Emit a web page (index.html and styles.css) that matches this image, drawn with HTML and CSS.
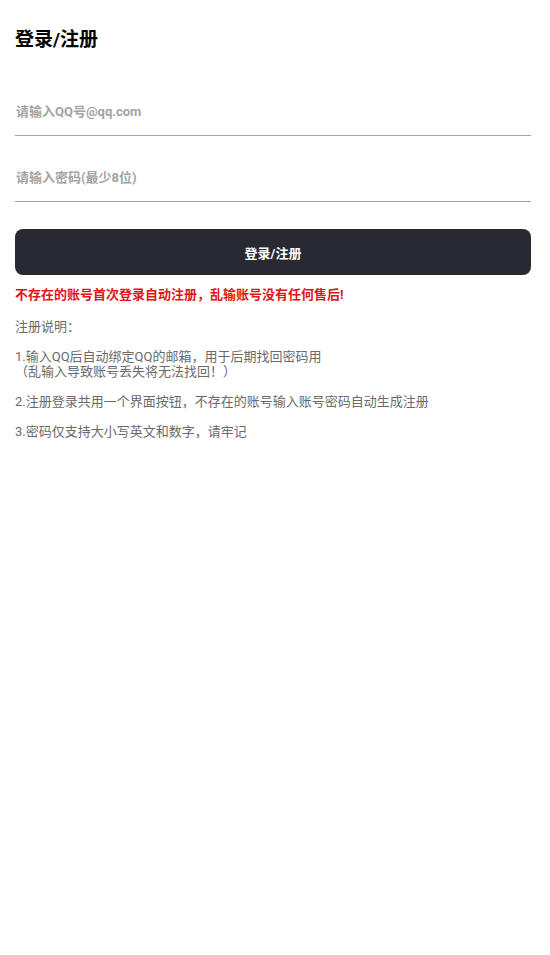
FILE: index.html
```html
<!DOCTYPE html>
<html lang="zh-CN">
<head>
<meta charset="utf-8">
<title>登录/注册</title>
<link rel="stylesheet" href="styles.css">
</head>
<body>
<div class="page">
  <h1 class="title">登录/注册</h1>
  <form class="form">
    <input class="field" type="text" placeholder="请输入QQ号@qq.com">
    <input class="field" type="password" placeholder="请输入密码(最少8位)">
    <button class="btn" type="button">登录/注册</button>
  </form>
  <p class="warn">不存在的账号首次登录自动注册，乱输账号没有任何售后!</p>
  <div class="notes">
    <p>注册说明：</p>
    <p>1.输入QQ后自动绑定QQ的邮箱，用于后期找回密码用<br>（乱输入导致账号丢失将无法找回！）</p>
    <p>2.注册登录共用一个界面按钮，不存在的账号输入账号密码自动生成注册</p>
    <p>3.密码仅支持大小写英文和数字，请牢记</p>
  </div>
</div>
</body>
</html>
```
FILE: styles.css
```css
* { box-sizing: border-box; }
html, body { margin: 0; padding: 0; background: #fff; }
body {
  font-family: Roboto, "Noto Sans CJK SC", "Noto Sans", sans-serif;
  color: #333;
}
.page {
  padding: 26px 19px 0 15px;
}
.title {
  margin: 0;
  font-size: 19px;
  line-height: 28px;
  font-weight: 700;
  color: #000;
}
.form {
  display: flex;
  flex-direction: column;
  margin-top: 34px;
}
.field {
  height: 48px;
  border: 0;
  border-bottom: 1.5px solid #a3a3a3;
  padding: 0 1px;
  font-family: inherit;
  font-size: 13px;
  font-weight: 700;
  color: #333;
  outline: none;
  background: transparent;
}
.field + .field { margin-top: 18px; }
.field::placeholder { color: #a3a3a3; }
.btn {
  margin-top: 27px;
  height: 46px;
  border: 0;
  border-radius: 8px;
  background: #292931;
  color: #fff;
  font-family: inherit;
  font-size: 13px;
  font-weight: 700;
}
.warn {
  margin: 11px 0 0;
  font-size: 13px;
  line-height: 18px;
  font-weight: 700;
  color: #e01515;
}
.notes {
  margin-top: 15px;
  display: flex;
  flex-direction: column;
  gap: 15px;
  color: #6a6a6a;
  font-size: 13px;
  line-height: 15px;
}
.notes p { margin: 0; }
```
